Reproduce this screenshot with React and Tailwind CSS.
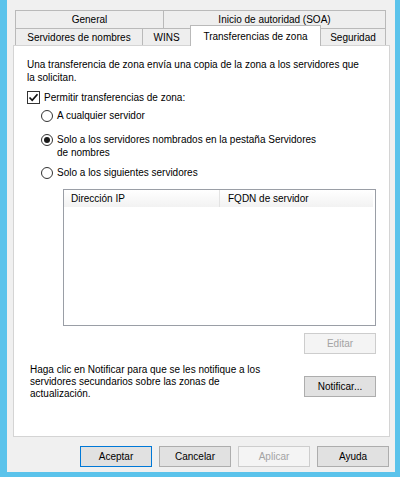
import React from 'react';

function Tab({ w, className = '', children }) {
  return (
    <div
      className={`flex items-center justify-center border-t border-r border-[#b9b9b9] bg-[#eeeeee] whitespace-nowrap ${className}`}
      style={{ width: w }}
    >
      {children}
    </div>
  );
}

function Button({ children, disabled, focused, className = '' }) {
  let tone = 'bg-[#e1e1e1] border-[#adadad] text-black';
  if (disabled) tone = 'bg-[#f4f4f4] border-[#cdcdcd] text-[#a3a3a3]';
  if (focused) tone = 'bg-[#e1e1e1] border-[#0078d7] text-black';
  return (
    <div className={`w-[72px] h-[21px] border flex items-center justify-center ${tone} ${className}`}>
      {children}
    </div>
  );
}

function Radio({ checked }) {
  return (
    <div className="w-[12px] h-[12px] rounded-full border border-[#333333] bg-white flex items-center justify-center shrink-0">
      {checked && <div className="w-[6px] h-[6px] rounded-full bg-[#1a1a1a]" />}
    </div>
  );
}

export default function App() {
  return (
    <div className="w-[400px] h-[477px] bg-[#5bc3eb] pl-[7px] pr-[5px] pb-[5px] font-['Liberation_Sans',Arial,sans-serif] text-[10px] text-black">
      <div className="h-full bg-[#f0f0f0] flex flex-col pt-[10px] pl-[6px]">
        {/* Tabs */}
        <div className="ml-[2px] w-[371px] relative z-10 flex flex-col">
          <div className="flex h-[18px]">
            <Tab w={149} className="border-l">General</Tab>
            <Tab w={222}>Inicio de autoridad (SOA)</Tab>
          </div>
          <div className="flex items-end h-[20px] -mt-[3px]">
            <Tab w={128} className="border-l h-[17px]">Servidores de nombres</Tab>
            <Tab w={48} className="h-[17px]">WINS</Tab>
            <div className="w-[131px] h-[21px] -ml-px mb-[-1px] bg-white border-l border-t border-r border-[#b9b9b9] flex items-start justify-center pt-[3px] whitespace-nowrap">
              Transferencias de zona
            </div>
            <Tab w={65} className="h-[17px]">Seguridad</Tab>
          </div>
        </div>

        {/* Panel */}
        <div className="w-[377px] h-[392px] bg-white border border-[#d4d4d4] px-[13px] pt-[12px] flex flex-col">
          <p className="leading-[13px] whitespace-nowrap">
            Una transferencia de zona envía una copia de la zona a los servidores que
            <br />
            la solicitan.
          </p>

          <div className="mt-[7px] h-[13px] flex items-center gap-[4px]">
            <div className="w-[13px] h-[13px] border border-[#333333] bg-white flex items-center justify-center">
              <svg width="11" height="11" viewBox="0 0 11 11">
                <path d="M1.5 5.5 L4.2 8.3 L9.5 2.2" fill="none" stroke="#111" strokeWidth="1.7" />
              </svg>
            </div>
            <span>Permitir transferencias de zona:</span>
          </div>

          <div className="ml-[14px] flex flex-col">
            <div className="mt-[5px] h-[13px] flex items-center gap-[4px]">
              <Radio />
              <span>A cualquier servidor</span>
            </div>
            <div className="mt-[11px] flex items-start gap-[4px]">
              <div className="h-[13px] flex items-center">
                <Radio checked />
              </div>
              <span className="leading-[13px]">
                Solo a los servidores nombrados en la pestaña Servidores
                <br />
                de nombres
              </span>
            </div>
            <div className="mt-[7px] h-[13px] flex items-center gap-[4px]">
              <Radio />
              <span>Solo a los siguientes servidores</span>
            </div>
          </div>

          {/* List */}
          <div className="mt-[10px] ml-[36px] w-[313px] h-[137px] border border-[#9a9ea6] bg-white flex flex-col">
            <div className="h-[17px] mr-[2px] flex bg-gradient-to-b from-white to-[#f2f2f2]">
              <div className="w-[156px] border-r border-[#e3e3e3] pl-[7px] flex items-center">Dirección IP</div>
              <div className="flex-1 pl-[8px] flex items-center">FQDN de servidor</div>
            </div>
          </div>

          <div className="mt-[7px] flex justify-end">
            <Button disabled>Editar</Button>
          </div>

          <div className="mt-[10px] flex justify-between items-start">
            <p className="ml-[3px] leading-[12px]">
              Haga clic en Notificar para que se les notifique a los
              <br />
              servidores secundarios sobre las zonas de
              <br />
              actualización.
            </p>
            <Button className="mt-[12px]">Notificar...</Button>
          </div>
        </div>

        {/* Bottom buttons */}
        <div className="mt-[9px] ml-[67px] flex gap-[7px]">
          <Button focused>Aceptar</Button>
          <Button>Cancelar</Button>
          <Button disabled>Aplicar</Button>
          <Button>Ayuda</Button>
        </div>
      </div>
    </div>
  );
}
